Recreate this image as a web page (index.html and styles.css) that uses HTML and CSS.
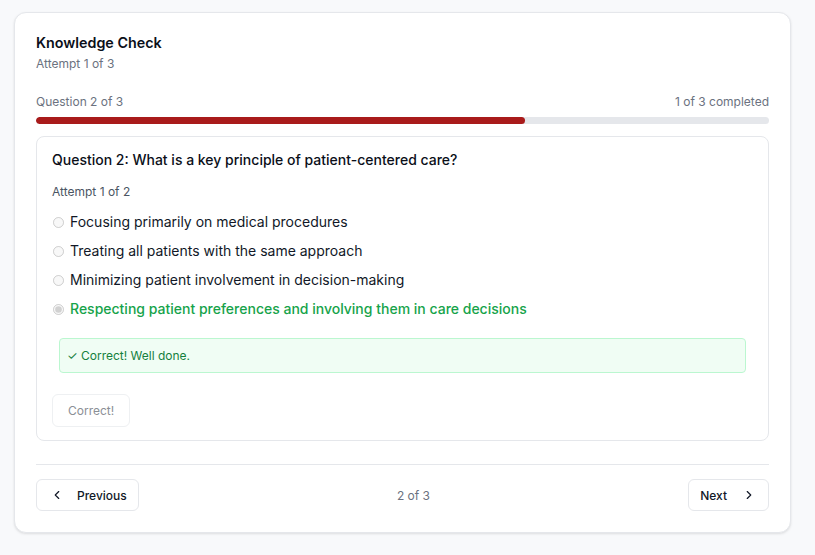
FILE: index.html
```html
<!DOCTYPE html>
<html lang="en">
<head>
<meta charset="utf-8">
<title>Knowledge Check</title>
<link rel="stylesheet" href="styles.css">
</head>
<body>
<div class="card">
  <div class="card-header">
    <h2 class="title">Knowledge Check</h2>
    <p class="subtitle">Attempt 1 of 3</p>
  </div>

  <div class="progress-meta">
    <span>Question 2 of 3</span>
    <span>1 of 3 completed</span>
  </div>
  <div class="progress-track"><div class="progress-fill" style="width:66.7%"></div></div>

  <div class="question">
    <h3 class="q-title">Question 2: What is a key principle of patient-centered care?</h3>
    <p class="q-attempt">Attempt 1 of 2</p>
    <div class="options">
      <label class="option"><input type="radio" name="q2" disabled><span>Focusing primarily on medical procedures</span></label>
      <label class="option"><input type="radio" name="q2" disabled><span>Treating all patients with the same approach</span></label>
      <label class="option"><input type="radio" name="q2" disabled><span>Minimizing patient involvement in decision-making</span></label>
      <label class="option correct"><input type="radio" name="q2" checked disabled><span>Respecting patient preferences and involving them in care decisions</span></label>
    </div>
    <div class="feedback">✓ Correct! Well done.</div>
    <button class="submit" disabled>Correct!</button>
  </div>

  <div class="footer">
    <button class="nav-btn prev">
      <svg width="14" height="14" viewBox="0 0 24 24" fill="none" stroke="currentColor" stroke-width="2" stroke-linecap="round" stroke-linejoin="round"><path d="M15 18l-6-6 6-6"/></svg>
      <span>Previous</span>
    </button>
    <span class="page">2 of 3</span>
    <button class="nav-btn next">
      <span>Next</span>
      <svg width="14" height="14" viewBox="0 0 24 24" fill="none" stroke="currentColor" stroke-width="2" stroke-linecap="round" stroke-linejoin="round"><path d="M9 18l6-6-6-6"/></svg>
    </button>
  </div>
</div>
</body>
</html>
```

FILE: styles.css
```css
* { box-sizing: border-box; }
html, body { margin: 0; }
body {
  background: #f8f9fb;
  font-family: Inter, "Noto Sans", "Liberation Sans", sans-serif;
  color: #111827;
  padding: 12px 14px;
}
.card {
  width: 777px;
  background: #fff;
  border: 1px solid #e5e7eb;
  border-radius: 12px;
  box-shadow: 0 1px 3px rgba(0,0,0,0.08), 0 1px 2px rgba(0,0,0,0.04);
  padding: 20px 21px 21px;
}
.title {
  margin: 0;
  font-size: 14.3px;
  line-height: 20px;
  font-weight: 600;
  color: #0b0f19;
}
.subtitle {
  margin: 3px 0 0;
  font-size: 12px;
  line-height: 16px;
  color: #6b7280;
}
.progress-meta {
  margin-top: 22px;
  display: flex;
  justify-content: space-between;
  font-size: 12px;
  line-height: 16px;
  color: #6b7280;
}
.progress-track {
  margin-top: 7px;
  height: 7px;
  background: #e5e7eb;
  border-radius: 4px;
  overflow: hidden;
}
.progress-fill {
  height: 100%;
  background: #a91b1b;
  border-radius: 4px;
}
.question {
  margin-top: 12px;
  border: 1px solid #e5e7eb;
  border-radius: 8px;
  padding: 14px 15px 13px;
}
.q-title {
  margin: 0;
  font-size: 14px;
  line-height: 18px;
  font-weight: 500;
  color: #0b0f19;
}
.q-attempt {
  margin: 15px 0 0;
  font-size: 12px;
  line-height: 16px;
  color: #4b5563;
}
.options {
  margin-top: 12px;
  display: flex;
  flex-direction: column;
  gap: 9px;
}
.option {
  display: flex;
  align-items: center;
  gap: 6px;
  font-size: 14px;
  line-height: 20px;
  color: #111827;
}
.option input {
  margin: 0 0 0 1px;
  width: 11px;
  height: 11px;
}
.option.correct { color: #16a34a; font-weight: 500; }
.feedback {
  margin: 19px 7px 0;
  background: #f0fdf4;
  border: 1px solid #bbf7d0;
  border-radius: 4px;
  padding: 8px 7px;
  font-size: 12px;
  line-height: 17px;
  color: #15803d;
}
.submit {
  margin-top: 21px;
  height: 33px;
  padding: 0 15px;
  background: #fff;
  border: 1px solid #eef0f2;
  border-radius: 6px;
  font-family: inherit;
  font-size: 12px;
  color: #8b8f96;
}
.footer {
  margin-top: 23px;
  border-top: 1px solid #e5e7eb;
  padding-top: 14px;
  display: flex;
  justify-content: space-between;
  align-items: center;
}
.nav-btn {
  height: 32px;
  display: flex;
  align-items: center;
  background: #fff;
  border: 1px solid #e5e7eb;
  border-radius: 6px;
  font-family: inherit;
  font-size: 12px;
  font-weight: 500;
  color: #111827;
}
.nav-btn.prev { padding: 0 11px 0 13px; gap: 13px; }
.nav-btn.next { padding: 0 12px 0 11px; gap: 15px; }
.page {
  font-size: 12px;
  color: #6b7280;
}
```
